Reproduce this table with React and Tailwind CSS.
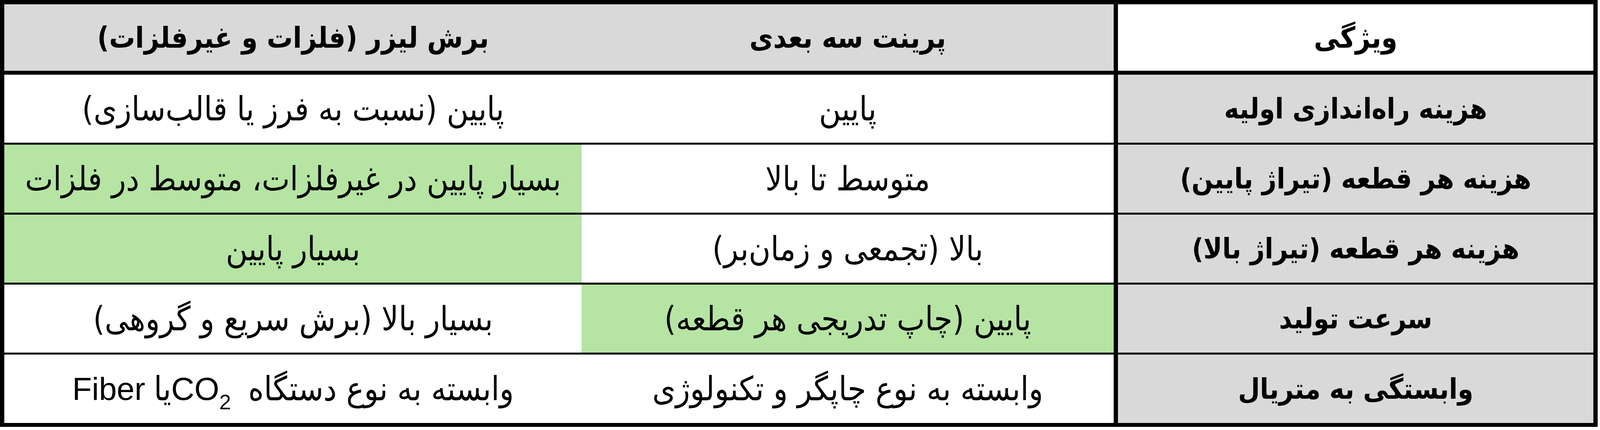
const latin = "font-['Liberation_Sans_Narrow','Liberation_Sans',sans-serif] text-[82px]";

const rows = [
  {
    label: "هزینه راه‌اندازی اولیه",
    print: "پایین",
    laser: "پایین (نسبت به فرز یا قالب‌سازی)",
    printBg: "bg-white",
    laserBg: "bg-white",
  },
  {
    label: "هزینه هر قطعه (تیراژ پایین)",
    print: "متوسط تا بالا",
    laser: "بسیار پایین در غیرفلزات، متوسط در فلزات",
    printBg: "bg-white",
    laserBg: "bg-[#b5e4a3]",
  },
  {
    label: "هزینه هر قطعه (تیراژ بالا)",
    print: "بالا (تجمعی و زمان‌بر)",
    laser: "بسیار پایین",
    printBg: "bg-white",
    laserBg: "bg-[#b5e4a3]",
  },
  {
    label: "سرعت تولید",
    print: "پایین (چاپ تدریجی هر قطعه)",
    laser: "بسیار بالا (برش سریع و گروهی)",
    printBg: "bg-[#b5e4a3]",
    laserBg: "bg-white",
  },
  {
    label: "وابستگی به متریال",
    print: "وابسته به نوع چاپگر و تکنولوژی",
    laser: (
      <>
        <span className="pl-[44px]">وابسته به نوع دستگاه</span>
        <span className={latin}>
          CO<sub className="text-[54px] align-[-0.2em]">2</sub>
        </span>
        <span className="pl-[22px]">یا</span>
        <span className={latin}>Fiber</span>
      </>
    ),
    printBg: "bg-white",
    laserBg: "bg-white",
  },
];

function Cell({ children, className = "" }) {
  return (
    <div className={`flex items-center justify-center whitespace-nowrap ${className}`}>
      {children}
    </div>
  );
}

export default function App() {
  return (
    <div className="w-full h-[1100px] bg-white">
      <div
        dir="rtl"
        className="w-[calc(100%-6px)] border-t-[11px] border-x-[11px] border-b-[10px] border-black text-black leading-none font-['DejaVu_Sans_Condensed','DejaVu_Sans',sans-serif]"
      >
        {/* سرستون */}
        <div className="grid grid-cols-[1325fr_1469fr_1595fr] h-[180px] border-b-[10px] border-black font-bold text-[74px]">
          <Cell className="border-l-[11px] border-black bg-white">ویژگی</Cell>
          <Cell className="bg-[#d9d9d9]">پرینت سه بعدی</Cell>
          <Cell className="bg-[#d9d9d9]">برش لیزر (فلزات و غیرفلزات)</Cell>
        </div>

        {rows.map((row, i) => (
          <div
            key={i}
            className={`grid grid-cols-[1325fr_1469fr_1595fr] ${
              i === rows.length - 1
                ? "h-[175px]"
                : "h-[179px] border-b-[5px] border-black"
            }`}
          >
            <Cell className="border-l-[11px] border-black bg-[#d9d9d9] font-bold text-[72px]">
              {row.label}
            </Cell>
            <Cell className={`text-[85px] ${row.printBg}`}>{row.print}</Cell>
            <Cell className={`text-[85px] ${row.laserBg}`}>{row.laser}</Cell>
          </div>
        ))}
      </div>
    </div>
  );
}
